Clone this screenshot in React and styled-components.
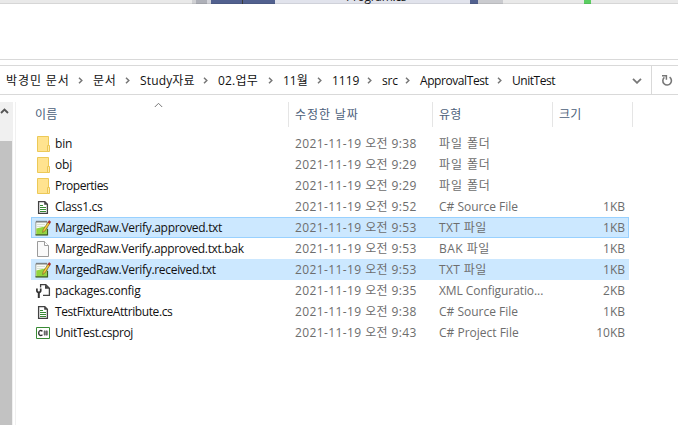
import React from "react";
import styled, { createGlobalStyle } from "styled-components";

const Global = createGlobalStyle`
  * { box-sizing: border-box; }
  body { margin: 0; background: #fff; overflow: hidden; }
`;

const Window = styled.div`
  width: 678px;
  height: 425px;
  display: flex;
  flex-direction: column;
  overflow: hidden;
  background: #fff;
  color: #111;
  font: 12px/21px "Open Sans", "Noto Sans CJK KR", sans-serif;
  white-space: nowrap;
`;

const Backdrop = styled.div`
  height: 4px;
  flex: none;
  display: flex;
  overflow: hidden;
`;

const Strip = styled.div`
  flex: ${(p) => (p.$w ? `0 0 ${p.$w}px` : "1")};
  height: 4px;
  background: ${(p) => p.$bg};
  box-shadow: inset 0 -1px 0 rgba(0, 0, 0, 0.08);
`;

const TabTitle = styled.div`
  margin: -12px 0 0 71px;
  line-height: 17px;
  letter-spacing: -0.3px;
  color: #1e1e1e;
`;

const Ribbon = styled.div`
  height: 56px;
  flex: none;
  border-bottom: 1px solid #d9d9d9;
`;

const AddressBar = styled.div`
  height: 30px;
  margin-top: 5px;
  flex: none;
  display: flex;
  align-items: center;
  border: solid #d9d9d9;
  border-width: 1px 0;
`;

const Crumb = styled.div`
  width: ${(p) => p.$w}px;
  flex: none;
  display: flex;
  justify-content: space-between;
  align-items: center;
  padding-right: 10px;
  letter-spacing: ${(p) => p.$ls || 0}px;
`;

const Crumbs = styled.div`
  display: flex;
  flex: 1;
  padding-left: 6px;
`;

const IconCell = styled.div`
  display: flex;
  align-items: center;
  justify-content: center;
  width: ${(p) => p.$w}px;
  height: 28px;
  padding: 1px 0 0 ${(p) => (p.$line ? 4 : 0)}px;
  border-left: ${(p) => (p.$line ? "1px solid #d9d9d9" : "0")};
`;

const Body = styled.div`
  flex: 1;
  display: flex;
  margin-top: 7px;
`;

const Scrollbar = styled.div`
  width: 13px;
  background: #f0f0f0;
  display: flex;
  flex-direction: column;
`;

const ScrollUp = styled.div`
  display: flex;
  height: 39px;
  padding-top: 5px;
`;

const Thumb = styled.div`
  flex: 1;
  width: 12px;
  background: #c2c2c2;
`;

const Pane = styled.div`
  flex: 1;
  margin-left: 2px;
  border-left: 1px solid #f0f0f0;
  padding-left: 15px;
`;

const Header = styled.div`
  display: grid;
  grid-template-columns: 258px 144px 120px 80px;
  height: 25px;
  margin-bottom: 6px;
  color: #4c607a;
`;

const HeadCell = styled.div`
  border-right: 1px solid #e5e5e5;
  padding: 2px 0 0 ${(p) => p.$pad || 6}px;
  letter-spacing: ${(p) => p.$ls || 0.2}px;
  display: flex;
`;

const SortMark = styled.svg`
  margin: -2px 0 0 97px;
`;

const Row = styled.div`
  display: grid;
  grid-template-columns: 24px 240px 144px 100px 86px;
  width: 598px;
  height: 21px;
  align-items: center;
  background: ${(p) => (p.$selected ? "#cce8ff" : "transparent")};
  box-shadow: ${(p) => (p.$focused ? "inset 0 0 0 1px #99d1ff" : "none")};
`;

const Name = styled.div`
  letter-spacing: ${(p) => p.$ls || 0}px;
`;

const Meta = styled.div`
  color: #6d6d6d;
  text-align: ${(p) => (p.$right ? "right" : "left")};
  letter-spacing: ${(p) => p.$ls || 0}px;
`;

const FileIcon = styled.svg`
  display: block;
  margin-left: 4px;
`;

const Chevron = () => (
  <svg width="5" height="7" viewBox="0 0 5 7">
    <path d="M1 .8 3.8 3.5 1 6.2" fill="none" stroke="#777" strokeWidth="1.5" />
  </svg>
);

const icons = {
  folder: (
    <>
      <path d="M2.5.5h11v15h-11z" fill="#ffe38f" stroke="#ecc957" />
      <path d="M12.5 9.5h2v6h-2z" fill="#ffe9a6" stroke="#ebc654" />
    </>
  ),
  source: (
    <>
      <path d="M3.6 2.6h6.2l2.6 2.6v9.2H3.6z" fill="#fff" stroke="#424242" strokeWidth="1.3" />
      <path d="M9.2 2.5v3.3h3.3z" fill="#424242" />
      <path d="M5 6.5h3M5 8.5h6M5 10.5h6M5 12.5h6" stroke="#388a34" />
    </>
  ),
  note: (
    <>
      <path d="M.8 1.8h11.4v13H.8z" fill="#f8faf6" stroke="#8b9088" strokeWidth=".8" />
      <path d="M1.3 8.5 11.8 6v8.5H1.3z" fill="#93d53f" />
      <path d="M2 4.5h8M2 6.5h6" stroke="#cbd6c6" strokeWidth=".7" />
      <path d="M1.5 1.6h10.5" stroke="#4c4c4c" strokeDasharray="1 1" strokeWidth="1.8" />
      <path d="M.5 14.8h12V9" fill="none" stroke="#3c641c" strokeWidth="1.2" />
      <path d="m7.6 12.5.5-2.7 4.9-7.6 1.8 1.2-4.9 7.6z" fill="#f8c93d" stroke="#6f5825" strokeWidth=".6" />
      <path d="m13 2.2 1-1.6 1.7 1.2-.9 1.7z" fill="#c9302c" stroke="#8d2020" strokeWidth=".5" />
    </>
  ),
  blank: (
    <>
      <path d="M2.5.5h7l4 4v11h-11z" fill="#fafafa" stroke="#9b9b9b" />
      <path d="M9.5.5v4h4" fill="#fff" stroke="#9b9b9b" />
    </>
  ),
  config: (
    <>
      <path d="M5.6 4.5V1.6h5.2l3.6 3.6v7.2H8" fill="#fff" stroke="#424242" strokeWidth="1.3" />
      <path d="M10 1.5v4.3h4.5z" fill="#424242" />
      <path d="M1.9 5.5v2.3c0 1 .8 1.6 1.9 1.6s1.9-.6 1.9-1.6V5.5" fill="none" stroke="#333" strokeWidth="1.7" />
      <path d="M3.8 9v6" stroke="#333" strokeWidth="2" />
    </>
  ),
  project: (
    <>
      <path d="M1.5 2.5h13v11h-13z" fill="#fff" stroke="#388a34" />
      <path d="M7.5 6.2C5.2 4.6 3.7 6 3.7 8s1.5 3.4 3.8 1.8" fill="none" stroke="#333" strokeWidth="1.4" />
      <path d="M9.8 5.3v5.4M11.8 5.3v5.4M8.5 7h4.6M8.5 9h4.6" stroke="#333" strokeWidth=".8" />
    </>
  ),
};

const crumbs = [
  ["박경민 문서", 87, 0.9],
  ["문서", 47, 0.7],
  ["Study자료", 78, 0.15],
  ["02.업무", 65, 0.2],
  ["11월", 49, 0],
  ["1119", 50, 0],
  ["src", 38, -0.2],
  ["ApprovalTest", 92, -0.42],
  ["UnitTest", 60, -0.45],
];

const folderType = { type: "파일 폴더", typeLs: 0.9 };

const files = [
  { icon: "folder", name: "bin", ls: -0.2, time: "9:38", ...folderType },
  { icon: "folder", name: "obj", ls: -0.2, time: "9:29", ...folderType },
  { icon: "folder", name: "Properties", ls: -0.5, time: "9:29", ...folderType },
  { icon: "source", name: "Class1.cs", ls: -0.3, time: "9:52", type: "C# Source File", size: "1KB" },
  { icon: "note", name: "MargedRaw.Verify.approved.txt", ls: -0.31, time: "9:53", type: "TXT 파일", typeLs: 0.4, size: "1KB", selected: true, focused: true },
  { icon: "blank", name: "MargedRaw.Verify.approved.txt.bak", ls: -0.33, time: "9:53", type: "BAK 파일", typeLs: 0.5, size: "1KB" },
  { icon: "note", name: "MargedRaw.Verify.received.txt", ls: -0.31, time: "9:53", type: "TXT 파일", typeLs: 0.4, size: "1KB", selected: true },
  { icon: "config", name: "packages.config", ls: -0.22, time: "9:35", type: "XML Configuratio...", typeLs: -0.08, size: "2KB" },
  { icon: "source", name: "TestFixtureAttribute.cs", ls: -0.4, time: "9:38", type: "C# Source File", size: "1KB" },
  { icon: "project", name: "UnitTest.csproj", ls: -0.4, time: "9:43", type: "C# Project File", size: "10KB" },
];

export default function App() {
  return (
    <Window>
      <Global />
      <Backdrop>
        <Strip $w={192} $bg="#e9e9e9" />
        <Strip $w={4} $bg="#cfd0d3" />
        <Strip $w={11} $bg="#aeb0b8" />
        <Strip $w={4} $bg="#d3d4da" />
        <Strip $w={31} $bg="#52618f" />
        <Strip $w={1} $bg="#3c3c3c" />
        <Strip $w={32} $bg="#52618f" />
        <Strip $w={195} $bg="#e1e3ec">
          <TabTitle>Program.cs</TabTitle>
        </Strip>
        <Strip $w={8} $bg="#52618f" />
        <Strip $w={25} $bg="#cacbcf" />
        <Strip $w={81} $bg="#e9e9e9" />
        <Strip $w={7} $bg="#5bce62" />
        <Strip $bg="#e9e9e9" />
      </Backdrop>
      <Ribbon />
      <AddressBar>
        <Crumbs>
          {crumbs.map(([label, w, ls], i) => (
            <Crumb key={label} $w={w} $ls={ls}>
              <span>{label}</span>
              {i < crumbs.length - 1 && <Chevron />}
            </Crumb>
          ))}
        </Crumbs>
        <IconCell $w={28}>
          <svg width="10" height="6" viewBox="0 0 10 6">
            <path d="m1 .8 4 4 4-4" fill="none" stroke="#777" strokeWidth="1.8" />
          </svg>
        </IconCell>
        <IconCell $w={27} $line>
          <svg width="12" height="13" viewBox="0 0 12 13">
            <path d="M3.4 3.4A4.3 4.3 0 1 0 8.6 3.2" fill="none" stroke="#777" strokeWidth="1.6" />
            <path d="M1 1.8h4.4v4" fill="none" stroke="#777" strokeWidth="1.5" />
          </svg>
        </IconCell>
      </AddressBar>
      <Body>
        <Scrollbar>
          <ScrollUp>
            <svg width="9" height="8" viewBox="0 0 9 8">
              <path d="m1 6 3.5-3.5L8 6" fill="none" stroke="#555" strokeWidth="1.9" />
            </svg>
          </ScrollUp>
          <Thumb />
        </Scrollbar>
        <Pane>
          <Header>
            <HeadCell $pad={4}>
              이름
              <SortMark width="9" height="6" viewBox="0 0 9 6">
                <path d="m.8 5 3.7-3.7L8.2 5" fill="none" stroke="#777" />
              </SortMark>
            </HeadCell>
            <HeadCell $ls={0.9}>수정한 날짜</HeadCell>
            <HeadCell>유형</HeadCell>
            <HeadCell>크기</HeadCell>
          </Header>
          {files.map((f) => (
            <Row key={f.name} $selected={f.selected} $focused={f.focused}>
              <FileIcon width="16" height="16" viewBox="0 0 16 16">{icons[f.icon]}</FileIcon>
              <Name $ls={f.ls}>{f.name}</Name>
              <Meta $ls={0.4}>2021-11-19 오전 {f.time}</Meta>
              <Meta $ls={f.typeLs}>{f.type}</Meta>
              <Meta $right>{f.size}</Meta>
            </Row>
          ))}
        </Pane>
      </Body>
    </Window>
  );
}
